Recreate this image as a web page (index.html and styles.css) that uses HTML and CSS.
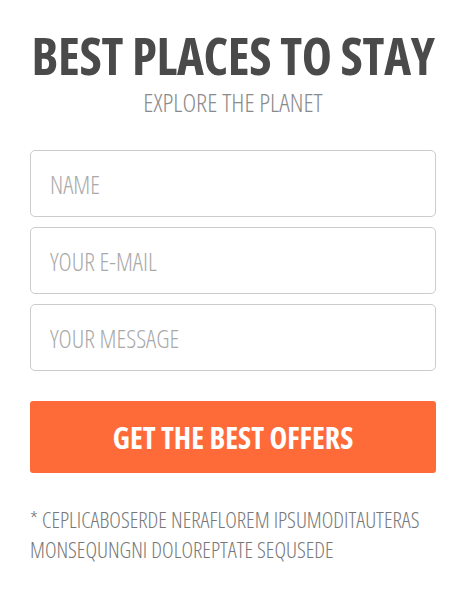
FILE: index.html
```html
<!DOCTYPE html>
<html lang="en">
<head>
<meta charset="utf-8">
<title>Best places to stay</title>
<link rel="stylesheet" href="styles.css">
</head>
<body>
<main class="card">
  <header class="head">
    <h1 class="title">BEST PLACES TO STAY</h1>
    <p class="subtitle">EXPLORE THE PLANET</p>
  </header>
  <form class="form">
    <input class="field" type="text" placeholder="NAME">
    <input class="field" type="email" placeholder="YOUR E-MAIL">
    <input class="field" type="text" placeholder="YOUR MESSAGE">
    <button class="submit" type="button">GET THE BEST OFFERS</button>
  </form>
  <p class="note">* CEPLICABOSERDE NERAFLOREM IPSUMODITAUTERAS MONSEQUNGNI DOLOREPTATE SEQUSEDE</p>
</main>
</body>
</html>
```
FILE: styles.css
```css
html, body {
  margin: 0;
  padding: 0;
  background: #ffffff;
}
body {
  font-family: "Open Sans", "Liberation Sans Narrow", "Liberation Sans", sans-serif;
  font-stretch: 75%;
}
.card {
  width: 406px;
  margin: 0 20px 0 30px;
  padding-top: 26px;
}
.head {
  text-align: center;
}
.title {
  margin: 0;
  font-size: 51px;
  line-height: 58px;
  font-weight: 700;
  color: #4a4a4a;
  font-stretch: 75%;
  white-space: nowrap;
  letter-spacing: -0.3px;
}
.subtitle {
  margin: 2px 0 0;
  font-size: 26px;
  line-height: 32px;
  font-weight: 300;
  color: #8a8a8a;
}
.form {
  display: flex;
  flex-direction: column;
  gap: 10px;
  margin-top: 32px;
}
.field {
  box-sizing: border-box;
  height: 67px;
  width: 100%;
  border: 1px solid #cccccc;
  border-radius: 5px;
  padding: 0 19px;
  font-family: inherit;
  font-stretch: 75%;
  font-size: 25px;
  font-weight: 300;
  color: #555;
  background: #fff;
  outline: none;
}
.field::placeholder {
  color: #a9a9a9;
}
.submit {
  margin-top: 20px;
  height: 72px;
  width: 100%;
  border: 0;
  border-radius: 3px;
  background: #ff6a39;
  color: #ffffff;
  font-family: inherit;
  font-stretch: 75%;
  font-size: 30px;
  font-weight: 700;
  cursor: pointer;
}
.note {
  margin: 31px 0 0;
  font-size: 22px;
  line-height: 30px;
  font-weight: 300;
  color: #777777;
}
```
